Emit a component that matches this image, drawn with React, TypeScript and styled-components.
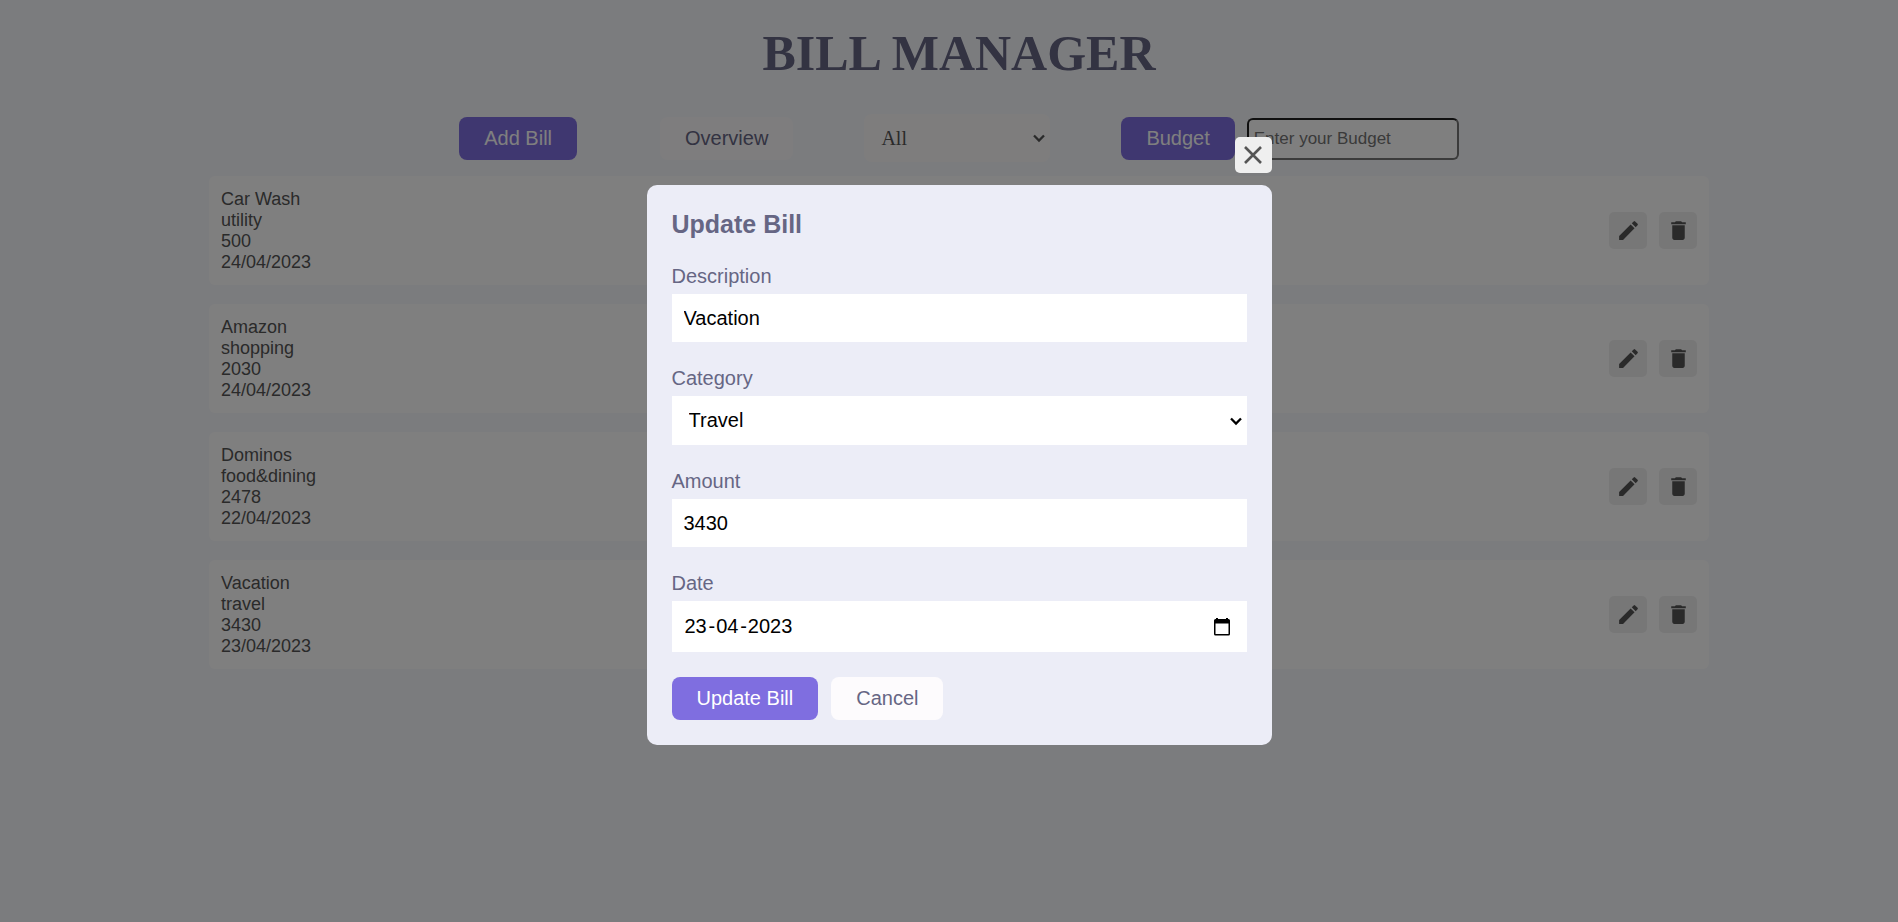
import React from "react";
import styled, { createGlobalStyle, css } from "styled-components";
import { MdDelete, MdEdit } from "react-icons/md";

const sans = `"Liberation Sans", Arial, Helvetica, sans-serif`;
const serif = `"Liberation Serif", "Times New Roman", Times, serif`;

const GlobalStyle = createGlobalStyle`
  * { box-sizing: border-box; }
  body {
    margin: 0;
    background: #f7f8fc;
    color: #555;
    font-family: ${sans};
    font-size: 20px;
  }
`;

const Page = styled.main`
  min-height: 100vh;
  padding: 24px 0 24px 20px;
`;

const Title = styled.h1`
  margin: 0 0 34px;
  text-align: center;
  font: bold 50px/58px ${serif};
  color: #666684;
`;

const Toolbar = styled.div`
  display: flex;
  justify-content: center;
  align-items: center;
  gap: 71px;
  height: 44px;
  margin-bottom: 16px;
`;

const BudgetGroup = styled.form`
  display: flex;
  align-items: flex-end;
  gap: 12px;
`;

const Button = styled.button<{ $primary?: boolean }>`
  height: 43px;
  padding: 0 25px;
  border: 0;
  border-radius: 8px;
  font: 20px/23px ${sans};
  white-space: nowrap;
  cursor: pointer;
  ${({ $primary }) =>
    $primary
      ? css`
          background: #7f6ee0;
          color: #fff;
        `
      : css`
          background: #fdfbfd;
          color: #666684;
        `}
`;

const AddButton = styled(Button)`
  margin-right: 12px;
`;

const plainSelect = css`
  appearance: none;
  border: 0;
  cursor: pointer;
`;

const SelectWrap = styled.div`
  position: relative;
  svg {
    position: absolute;
    right: 5px;
    top: calc(50% - 6px);
    pointer-events: none;
  }
`;

const FilterSelect = styled.select`
  ${plainSelect}
  display: block;
  width: 186px;
  height: 48px;
  padding: 0 17px;
  border-radius: 8px;
  background: #fdfbfb;
  color: #555;
  font: 20px/23px ${serif};
`;

const BudgetInput = styled.input`
  width: 212px;
  height: 42px;
  padding: 0 5px;
  border: 2px inset #767676;
  border-radius: 6px;
  background: #fff;
  font: 17px/20px ${sans};
  &::placeholder {
    color: #757575;
  }
`;

const BillList = styled.ul`
  display: flex;
  flex-direction: column;
  gap: 19px;
  max-width: 1500px;
  margin: 0 auto;
  padding: 0;
  list-style: none;
`;

const BillCard = styled.li`
  display: flex;
  justify-content: space-between;
  align-items: center;
  min-height: 109px;
  padding: 12px;
  border-radius: 6px;
  background: #fff;
`;

const BillText = styled.div`
  font-size: 18px;
  line-height: 21px;
`;

const Actions = styled.div`
  display: flex;
  gap: 12px;
`;

const IconButton = styled.button`
  display: grid;
  place-items: center;
  width: 38px;
  height: 37px;
  padding: 0;
  border: 0;
  border-radius: 5px;
  background: #efefef;
  color: #555;
  cursor: pointer;
`;

const Overlay = styled.div`
  position: fixed;
  inset: 0;
  display: flex;
  justify-content: center;
  align-items: flex-start;
  padding: 185px 0 24px 20px;
  background: rgba(0, 0, 0, 0.5);
`;

const Dialog = styled.section`
  position: relative;
  width: 625px;
  padding: 25px;
  border-radius: 10px;
  background: #ecedf7;
  color: #666684;
`;

const CloseButton = styled(IconButton)`
  position: absolute;
  top: -48px;
  right: 0;
  width: 37px;
  height: 36px;
`;

const DialogTitle = styled.h2`
  margin: 0 0 27px;
  font-size: 25px;
  line-height: 28px;
`;

const Field = styled.div`
  margin-bottom: 25px;
`;

const Label = styled.label`
  display: block;
  margin-bottom: 6px;
  line-height: 23px;
`;

const field = css`
  width: 100%;
  border: 0;
  background: #fff;
  color: #000;
  font: 20px/23px ${sans};
`;

const TextInput = styled.input`
  ${field}
  display: block;
  height: 48px;
  padding: 0 12px;
`;

const CategorySelect = styled.select`
  ${field}
  ${plainSelect}
  display: block;
  height: 49px;
  padding: 0 17px;
`;

const DateBox = styled.div`
  ${field}
  display: flex;
  align-items: center;
  height: 51px;
  padding: 0 12px;
`;

const DatePart = styled.input<{ $wide?: boolean }>`
  width: ${({ $wide }) => ($wide ? 48 : 25)}px;
  padding: 0 1px;
  border: 0;
  background: none;
  color: inherit;
  font: inherit;
`;

const PickerButton = styled.button`
  display: flex;
  margin-left: auto;
  padding: 0 4px;
  border: 0;
  background: none;
  color: #000;
  cursor: pointer;
`;

const Footer = styled.div`
  display: flex;
  gap: 13px;
`;

const Chevron = ({ color }: { color: string }) => (
  <svg width="12" height="12" viewBox="0 0 12 12" fill="none" stroke={color} strokeWidth="2.3" aria-hidden="true">
    <path d="M1 3.500 6 8.500 11 3.500" />
  </svg>
);

const CloseIcon = () => (
  <svg width="18" height="18" viewBox="0 0 18 18" fill="none" stroke="currentColor" strokeWidth="2.6" aria-hidden="true">
    <path d="M1 1 17 17M17 1 1 17" />
  </svg>
);

const CalendarIcon = () => (
  <svg width="18" height="20" viewBox="0 0 18 20" aria-hidden="true">
    <path fill="currentColor" fillRule="evenodd" d="M3 1h2v1h8V1h2v1h.5A1.5 1.5 0 0 1 17 3.500V17a1.500 1.500 0 0 1-1.500 1.500h-13A1.500 1.500 0 0 1 1 17V3.500A1.500 1.500 0 0 1 2.500 2H3zM2.500 6.500V17h13V6.500z" />
  </svg>
);

const bills = [
  { description: "Car Wash", category: "utility", amount: 500, date: "24/04/2023" },
  { description: "Amazon", category: "shopping", amount: 2030, date: "24/04/2023" },
  { description: "Dominos", category: "food&dining", amount: 2478, date: "22/04/2023" },
  { description: "Vacation", category: "travel", amount: 3430, date: "23/04/2023" },
];

export default function App() {
  return (
    <>
      <GlobalStyle />
      <Page>
        <Title>BILL MANAGER</Title>
        <Toolbar>
          <AddButton $primary>Add Bill</AddButton>
          <Button>Overview</Button>
          <SelectWrap>
            <FilterSelect aria-label="Filter by category" defaultValue="All">
              <option>All</option>
            </FilterSelect>
            <Chevron color="#555" />
          </SelectWrap>
          <BudgetGroup>
            <Button $primary type="button">Budget</Button>
            <BudgetInput aria-label="Budget" placeholder="Enter your Budget" />
          </BudgetGroup>
        </Toolbar>
        <BillList>
          {bills.map((bill) => (
            <BillCard key={bill.description}>
              <BillText>
                <div>{bill.description}</div>
                <div>{bill.category}</div>
                <div>{bill.amount}</div>
                <div>{bill.date}</div>
              </BillText>
              <Actions>
                <IconButton aria-label="Edit bill"><MdEdit size={25} /></IconButton>
                <IconButton aria-label="Delete bill"><MdDelete size={25} /></IconButton>
              </Actions>
            </BillCard>
          ))}
        </BillList>
      </Page>
      <Overlay>
        <Dialog role="dialog" aria-modal="true" aria-labelledby="dialog-title">
          <CloseButton aria-label="Close"><CloseIcon /></CloseButton>
          <DialogTitle id="dialog-title">Update Bill</DialogTitle>
          <form>
            <Field>
              <Label htmlFor="description">Description</Label>
              <TextInput id="description" defaultValue="Vacation" />
            </Field>
            <Field>
              <Label htmlFor="category">Category</Label>
              <SelectWrap>
                <CategorySelect id="category" defaultValue="Travel">
                  <option>Travel</option>
                </CategorySelect>
                <Chevron color="#000" />
              </SelectWrap>
            </Field>
            <Field>
              <Label htmlFor="amount">Amount</Label>
              <TextInput id="amount" inputMode="numeric" defaultValue="3430" />
            </Field>
            <Field>
              <Label htmlFor="day">Date</Label>
              <DateBox>
                <DatePart id="day" aria-label="Day" defaultValue="23" />-
                <DatePart aria-label="Month" defaultValue="04" />-
                <DatePart $wide aria-label="Year" defaultValue="2023" />
                <PickerButton type="button" aria-label="Show date picker"><CalendarIcon /></PickerButton>
              </DateBox>
            </Field>
            <Footer>
              <Button $primary type="button">Update Bill</Button>
              <Button type="button">Cancel</Button>
            </Footer>
          </form>
        </Dialog>
      </Overlay>
    </>
  );
}
